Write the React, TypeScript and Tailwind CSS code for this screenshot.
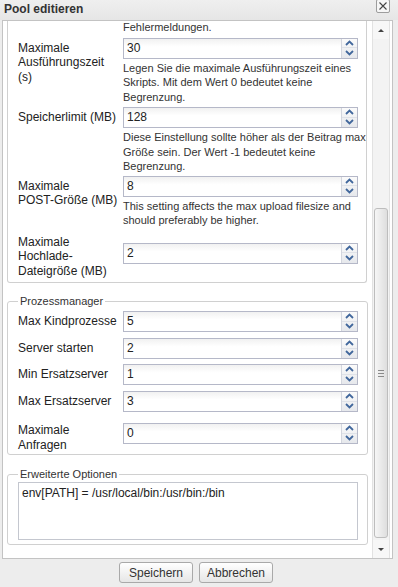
import React from 'react';

function ChevronUp() {
  return (
    <svg width="9" height="6" viewBox="0 0 9 6" fill="none">
      <path d="M1 5 L4.5 1.5 L8 5" stroke="#41679c" strokeWidth="1.8" />
    </svg>
  );
}

function ChevronDown() {
  return (
    <svg width="9" height="6" viewBox="0 0 9 6" fill="none">
      <path d="M1 1 L4.5 4.5 L8 1" stroke="#41679c" strokeWidth="1.8" />
    </svg>
  );
}

function SpinField({ value }: { value: string }) {
  return (
    <div className="flex h-[21px] w-[235px] shrink-0 border border-[#b5b8c8] bg-white">
      <div className="flex-1 bg-gradient-to-b from-[#f1f1f1] to-white to-[40%] pl-[3px] text-[12px] leading-[19px] text-[#222]">
        {value}
      </div>
      <div className="flex w-[16px] flex-col border-l border-[#d3d6de] bg-gradient-to-b from-[#fbfbfb] to-[#e6e8ec]">
        <div className="flex h-1/2 items-center justify-center border-b border-[#dfe2e8]">
          <ChevronUp />
        </div>
        <div className="flex h-1/2 items-center justify-center">
          <ChevronDown />
        </div>
      </div>
    </div>
  );
}

function Help({ children, className = '' }: { children: React.ReactNode; className?: string }) {
  return (
    <p className={`whitespace-nowrap text-[11px] leading-[14.5px] text-[#333] ${className}`}>{children}</p>
  );
}

function Label({ children, className = '' }: { children: React.ReactNode; className?: string }) {
  return (
    <div className={`w-[105px] shrink-0 text-[12px] leading-[14.5px] text-[#222] ${className}`}>{children}</div>
  );
}

function Scrollbar() {
  return (
    <div className="ml-px mr-[2px] flex w-[18px] flex-col border-x border-[#e2e2e2] bg-[#f3f3f3]">
      <div className="flex h-[18px] items-center justify-center bg-[#f7f7f7]">
        <div className="h-0 w-0 border-x-[3px] border-b-[3px] border-x-transparent border-b-[#444]" />
      </div>
      <div className="h-[169px]" />
      <div className="mx-[1px] flex h-[330px] items-center justify-center rounded-[3px] border border-[#bdbdbd] bg-gradient-to-r from-[#f6f6f6] to-[#dedede]">
        <div className="flex flex-col gap-[2px]">
          <div className="h-px w-[6px] bg-[#8a8a8a]" />
          <div className="h-px w-[6px] bg-[#8a8a8a]" />
          <div className="h-px w-[6px] bg-[#8a8a8a]" />
        </div>
      </div>
      <div className="flex-1" />
      <div className="flex h-[18px] items-center justify-center bg-[#f7f7f7]">
        <div className="h-0 w-0 border-x-[3px] border-t-[3px] border-x-transparent border-t-[#444]" />
      </div>
    </div>
  );
}

function Button({ children }: { children: React.ReactNode }) {
  return (
    <button className="h-[21px] w-[74px] rounded-[3px] border border-[#a9a9a9] bg-gradient-to-b from-white to-[#e6e6e6] text-[12px] text-[#333]">
      {children}
    </button>
  );
}

export default function App() {
  return (
    <div className="flex h-[587px] w-[398px] flex-col overflow-hidden bg-[#ededed] font-['Liberation_Sans',Arial,sans-serif]">
      <div className="flex h-[20px] shrink-0 items-start justify-between bg-gradient-to-b from-[#efefef] to-[#e6e6e6] pl-[4px] pr-[8px]">
        <span className="pt-[2px] text-[12px] font-bold leading-[15px] text-[#333]">Pool editieren</span>
        <div className="-mt-px flex h-[14px] w-[14px] items-center justify-center rounded-[2px] border border-[#9d9d9d] bg-[#f6f6f6]">
          <svg width="8" height="8" viewBox="0 0 8 8">
            <path d="M0.5 0.5 L7.5 7.5 M7.5 0.5 L0.5 7.5" stroke="#444" strokeWidth="1.1" />
          </svg>
        </div>
      </div>

      <div className="ml-[2px] flex h-[539px] w-[391px] shrink-0 border border-[#c3c3c3] bg-white">
        <div className="flex-1 overflow-hidden pl-[4px] pr-[4px]">
          {/* first fieldset, top scrolled out of view */}
          <div className="rounded-b-[3px] border-x border-b border-[#d0d0d0] pl-[10px] pr-[9px] pb-[4px]">
            <Help className="-mt-px pl-[105px]">Fehlermeldungen.</Help>

            <div className="mt-[3px] flex">
              <Label className="pt-[3px]">
                Maximale
                <br />
                Ausführungszeit
                <br />
                (s)
              </Label>
              <div>
                <SpinField value="30" />
                <Help className="mt-[2px]">
                  Legen Sie die maximale Ausführungszeit eines
                  <br />
                  Skripts. Mit dem Wert 0 bedeutet keine
                  <br />
                  Begrenzung.
                </Help>
              </div>
            </div>

            <div className="mt-[3px] flex">
              <Label className="pt-[3px]">Speicherlimit (MB)</Label>
              <div>
                <SpinField value="128" />
                <Help className="mt-[2px]">
                  Diese Einstellung sollte höher als der Beitrag max
                  <br />
                  Größe sein. Der Wert -1 bedeutet keine
                  <br />
                  Begrenzung.
                </Help>
              </div>
            </div>

            <div className="mt-[2px] flex">
              <Label className="pt-[3px]">
                Maximale
                <br />
                POST-Größe (MB)
              </Label>
              <div>
                <SpinField value="8" />
                <Help className="mt-[2px]">
                  This setting affects the max upload filesize and
                  <br />
                  should preferably be higher.
                </Help>
              </div>
            </div>

            <div className="mt-[7px] flex">
              <Label>
                Maximale
                <br />
                Hochlade-
                <br />
                Dateigröße (MB)
              </Label>
              <div className="pt-[8px]">
                <SpinField value="2" />
              </div>
            </div>
          </div>

          <fieldset className="mt-[12px] rounded-[3px] border border-[#d0d0d0] pl-[10px] pr-[9px] pb-[2px] pt-[3px]">
            <legend className="px-[2px] text-[11px] leading-[13px] text-[#333]">Prozessmanager</legend>
            <div className="flex items-center">
              <Label>Max Kindprozesse</Label>
              <SpinField value="5" />
            </div>
            <div className="mt-[6px] flex items-center">
              <Label>Server starten</Label>
              <SpinField value="2" />
            </div>
            <div className="mt-[5px] flex items-center">
              <Label>Min Ersatzserver</Label>
              <SpinField value="1" />
            </div>
            <div className="mt-[6px] flex items-center">
              <Label>Max Ersatzserver</Label>
              <SpinField value="3" />
            </div>
            <div className="mt-[11px] flex items-start">
              <Label>
                Maximale
                <br />
                Anfragen
              </Label>
              <SpinField value="0" />
            </div>
          </fieldset>

          <fieldset className="mt-[13px] rounded-[3px] border border-[#d0d0d0] pl-[10px] pr-[9px] pb-[4px] pt-px">
            <legend className="px-[2px] text-[11px] leading-[13px] text-[#333]">Erweiterte Optionen</legend>
            <div className="h-[58px] w-[340px] border border-[#c4c7cf] bg-white pl-[3px] pt-[3px] text-[12px] leading-[15px] text-[#222]">
              env[PATH] = /usr/local/bin:/usr/bin:/bin
            </div>
          </fieldset>
        </div>
        <Scrollbar />
      </div>

      <div className="flex flex-1 items-start justify-center gap-[6px] pr-[6px] pt-[3px]">
        <Button>Speichern</Button>
        <Button>Abbrechen</Button>
      </div>
    </div>
  );
}
